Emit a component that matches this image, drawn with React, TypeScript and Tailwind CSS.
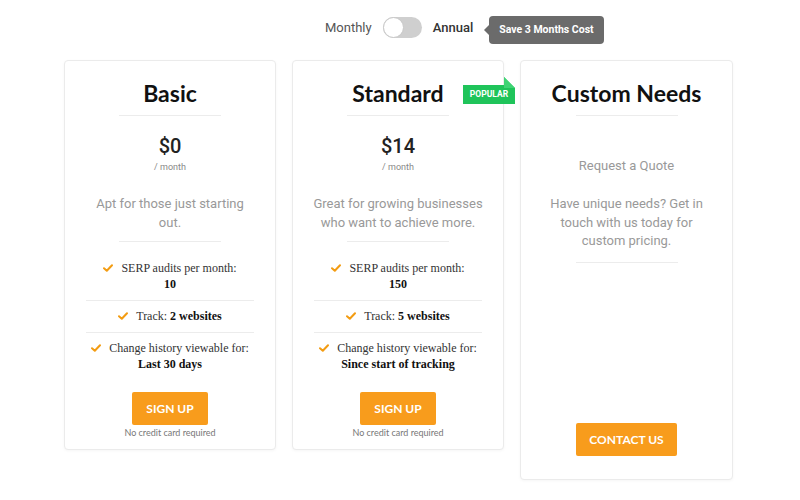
import React from "react";

const Check = () => (
  <svg width="10" height="8" viewBox="0 0 10 8" className="shrink-0">
    <path d="M1 4.2 L3.8 6.8 L9 1.2" fill="none" stroke="#f39c12" strokeWidth="2" strokeLinecap="round" strokeLinejoin="round" />
  </svg>
);

type Feature = { label: string; value: string; inline?: boolean };

const Divider = ({ className = "" }: { className?: string }) => (
  <div className={`h-px bg-[#ececec] ${className}`} />
);

const PlanCard = ({
  title,
  price,
  desc,
  features,
  popular,
}: {
  title: string;
  price: string;
  desc: string;
  features: Feature[];
  popular?: boolean;
}) => (
  <div className="relative w-[212px] flex flex-col items-center rounded border border-[#ebebeb] bg-white pt-[17px] pb-[10px] shadow-[0_1px_3px_rgba(0,0,0,0.04)]">
    {popular && (
      <div className="absolute left-[170px] top-[16px] w-[52px] h-[27px]">
        <svg width="52" height="27" viewBox="0 0 52 27" className="absolute inset-0">
          <polygon points="0,8 41,8 41,0 52,11 52,27 0,27" fill="#1fc45a" />
          <polygon points="41,0 52,11 41,11" fill="#3fd474" />
        </svg>
        <div className="absolute left-0 right-0 top-[8px] h-[19px] flex items-center justify-center text-[8.5px] font-bold text-white font-['Roboto',sans-serif]">
          POPULAR
        </div>
      </div>
    )}
    <h2 className="h-[30px] leading-[30px] text-[23px] font-bold text-[#111] font-['Lato',sans-serif]">{title}</h2>
    <Divider className="w-[102px] mt-[7px]" />
    <div className="mt-[18px] h-[24px] leading-[24px] text-[20px] font-medium text-[#222] font-['Roboto',sans-serif]">{price}</div>
    <div className="mt-[3px] h-[12px] leading-[12px] text-[9px] text-[#888] font-['Roboto',sans-serif]">/ month</div>
    <p className="mt-[21px] w-[170px] text-center text-[13px] leading-[19px] text-[#999] font-['Roboto',sans-serif]">{desc}</p>
    <Divider className="w-[102px] mt-[9px]" />
    <div className="mt-[18px] w-[168px] flex flex-col items-center font-['Liberation_Serif',serif] text-[12px] text-[#333]">
      {features.map((f, i) => (
        <React.Fragment key={i}>
          {i > 0 && <Divider className="w-[168px] mt-[8px] mb-[7px]" />}
          {f.inline ? (
            <div className="flex items-center gap-[8px] leading-[16px]">
              <Check />
              <span>
                {f.label} <b className="text-[#111]">{f.value}</b>
              </span>
            </div>
          ) : (
            <div className="flex flex-col items-center leading-[16px]">
              <div className="flex items-center gap-[8px]">
                <Check />
                <span>{f.label}</span>
              </div>
              <b className="text-[#111]">{f.value}</b>
            </div>
          )}
        </React.Fragment>
      ))}
    </div>
    <button className="mt-[20px] w-[76px] h-[33px] rounded-[2px] bg-[#f89c1c] text-white text-[12px] font-bold font-['Lato',sans-serif]">
      SIGN UP
    </button>
    <div className="mt-[2px] h-[12px] leading-[12px] text-[9px] text-[#777] font-['Lato',sans-serif]">No credit card required</div>
  </div>
);

export default function App() {
  return (
    <div className="w-[800px] h-[500px] bg-white overflow-hidden">
      <div className="flex items-center pl-[325px] pt-[16px] h-[28px] box-content">
        <span className="-mt-[5px] text-[13px] text-[#555] font-['Roboto',sans-serif]">Monthly</span>
        <div className="-mt-[5px] ml-[11px] w-[39px] h-[21px] rounded-full bg-[#cfcfcf] flex items-center">
          <div className="w-[21px] h-[21px] rounded-full bg-white border border-[#c8c8c8]" />
        </div>
        <span className="-mt-[5px] ml-[11px] text-[13px] font-medium text-[#333] font-['Roboto',sans-serif]">Annual</span>
        <div className="ml-[11px] flex items-center">
          <div className="w-0 h-0 border-y-[5px] border-y-transparent border-r-[5px] border-r-[#6b6b6b]" />
          <div className="h-[28px] px-[10px] rounded-[4px] bg-[#6b6b6b] flex items-center text-[10.5px] font-bold text-white font-['Roboto',sans-serif]">
            Save 3 Months Cost
          </div>
        </div>
      </div>
      <div className="mt-[16px] flex items-start gap-[16px] pl-[64px]">
        <PlanCard
          title="Basic"
          price="$0"
          desc="Apt for those just starting out."
          features={[
            { label: "SERP audits per month:", value: "10" },
            { label: "Track:", value: "2 websites", inline: true },
            { label: "Change history viewable for:", value: "Last 30 days" },
          ]}
        />
        <PlanCard
          title="Standard"
          price="$14"
          desc="Great for growing businesses who want to achieve more."
          popular
          features={[
            { label: "SERP audits per month:", value: "150" },
            { label: "Track:", value: "5 websites", inline: true },
            { label: "Change history viewable for:", value: "Since start of tracking" },
          ]}
        />
        <div className="w-[213px] h-[420px] flex flex-col items-center rounded border border-[#ebebeb] bg-white pt-[17px] pb-[23px] shadow-[0_1px_3px_rgba(0,0,0,0.04)]">
          <h2 className="h-[30px] leading-[30px] text-[23px] font-bold text-[#111] font-['Lato',sans-serif]">Custom Needs</h2>
          <Divider className="w-[102px] mt-[7px]" />
          <div className="mt-[40px] text-[13px] leading-[19px] text-[#999] font-['Roboto',sans-serif]">Request a Quote</div>
          <p className="mt-[20px] w-[160px] text-center text-[13px] leading-[18.5px] text-[#999] font-['Roboto',sans-serif]">
            Have unique needs? Get in touch with us today for custom pricing.
          </p>
          <Divider className="w-[102px] mt-[11px]" />
          <button className="mt-auto w-[101px] h-[33px] rounded-[2px] bg-[#f89c1c] text-white text-[12px] font-bold font-['Lato',sans-serif]">
            CONTACT US
          </button>
        </div>
      </div>
    </div>
  );
}
